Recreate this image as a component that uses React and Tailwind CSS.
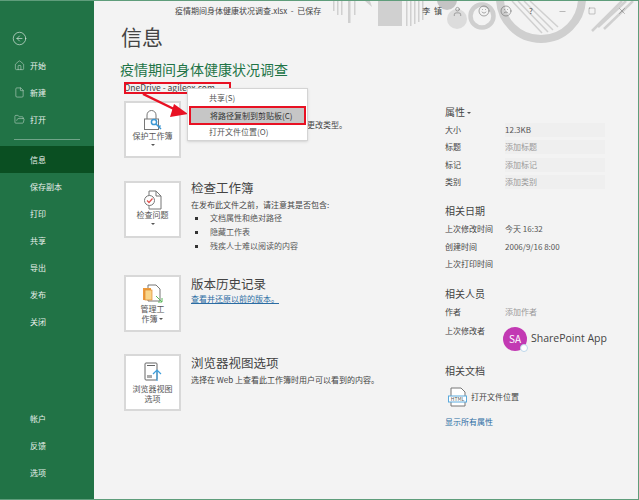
import { CircleArrowLeft, House, File, FolderOpen, User, Smile, Frown, Minus, Square, X } from 'lucide-react'

const cjk = { fontFamily: '"Noto Sans CJK SC", "Noto Sans", sans-serif' }

const navTop = [
  ['开始', House],
  ['新建', File],
  ['打开', FolderOpen],
]
const navMid = ['信息', '保存副本', '打印', '共享', '导出', '发布', '关闭']
const navBottom = ['帐户', '反馈', '选项']

function Banner() {
  return (
    <svg className="absolute left-[236px] top-0" width="309" height="48" viewBox="0 0 309 48">
      <g fill="#d0d0d0">
        <rect x="3" y="0" width="1.5" height="10" />
        <rect x="7" y="0" width="1.5" height="14" />
        <rect x="11" y="0" width="1.5" height="14" />
        <rect x="18" y="0" width="2.5" height="22" />
        <rect x="24" y="0" width="1.5" height="14" />
        <path d="M35 0 H40 L42 6 Z" />
        <rect x="48" y="0" width="24" height="25" />
        <rect x="76" y="0" width="1.5" height="25" />
        <rect x="80" y="0" width="1.5" height="25" />
        <rect x="84" y="0" width="1.5" height="23" />
        <rect x="88" y="0" width="1.5" height="21" />
        <rect x="92" y="0" width="1.5" height="19" />
        <circle cx="117" cy="-1" r="10" fill="#c4c4c4" />
        <circle cx="127" cy="18" r="10" fill="#dcdcdc" />
      </g>
      <circle cx="152" cy="15" r="11.5" fill="none" stroke="#cfcfcf" strokeWidth="4.5" />
      <circle cx="211" cy="-3" r="41" fill="none" stroke="#cfcfcf" strokeWidth="8" />
      <g stroke="#d0d0d0" strokeWidth="1.5">
        <path d="M182 0 L212 32" />
        <path d="M188 0 L218 31" />
        <path d="M194 0 L223 29" />
        <path d="M200 0 L228 26" />
      </g>
      <g stroke="#d0d0d0" strokeWidth="2.5">
        <path d="M262 30 L292 0" />
        <path d="M268 26 L296 0" />
        <path d="M274 28 L303 0" />
      </g>
    </svg>
  )
}

function ActionCard({ icon, label, className = '' }) {
  return (
    <div className={`w-[57px] h-[57px] shrink-0 bg-white border-2 border-[#d8d8d8] flex flex-col items-center justify-center text-[8px] leading-[10px] text-[#555] text-center ${className}`}>
      {icon}
      {label}
    </div>
  )
}

function LockIcon() {
  return (
    <svg width="20" height="21" viewBox="0 0 20 21">
      <path d="M4 9 V5 a4.5 4.5 0 0 1 9 0 V9" fill="none" stroke="#777" strokeWidth="1" />
      <rect x="1.5" y="9" width="14" height="10.5" fill="#fff" stroke="#777" />
      <circle cx="11" cy="12" r="2.6" fill="none" stroke="#3b97d3" strokeWidth="1.5" />
      <path d="M13 14 L18 19 M16 17 L17.5 15.5" stroke="#3b97d3" strokeWidth="1.5" />
    </svg>
  )
}

function InspectIcon() {
  return (
    <svg width="20" height="20" viewBox="0 0 20 20">
      <path d="M6 1 H13 L18 6 V19 H6 Z" fill="#fff" stroke="#777" />
      <path d="M13 1 V6 H18" fill="none" stroke="#777" />
      <circle cx="6.5" cy="10.5" r="5" fill="#fff" stroke="#777" />
      <path d="M4 10.5 L6 12.5 L9.5 8.5" fill="none" stroke="#e0524f" strokeWidth="1.2" />
    </svg>
  )
}

function ManageIcon() {
  return (
    <svg width="22" height="20" viewBox="0 0 22 20">
      <path d="M6 1 H14 L18 5 V17 H6 Z" fill="#fff" stroke="#777" />
      <rect x="1" y="4" width="8" height="12" fill="#ed9a3c" />
      <rect x="3" y="6" width="7" height="10" fill="#f9d58a" stroke="#e08a2e" strokeWidth="0.7" />
      <path d="M14 12 L20 18 M20 14 V18 H16" fill="none" stroke="#5cb85c" strokeWidth="1" />
    </svg>
  )
}

function BrowserIcon() {
  return (
    <svg width="20" height="20" viewBox="0 0 20 20" className="mb-0.5">
      <rect x="2" y="1" width="12" height="17" rx="1" fill="#fff" stroke="#666" />
      <path d="M4 3.5 H12" stroke="#666" />
      <rect x="4" y="13" width="5" height="3" fill="#aaa" />
      <path d="M14 19 V8 M10 12 L14 8 L18 12" fill="none" stroke="#3f9fdc" strokeWidth="1.2" />
    </svg>
  )
}

function Caret({ block }) {
  return <span className={`${block ? 'block mt-[3px]' : 'inline-block align-middle'} w-0 h-0 border-x-[2px] border-x-transparent border-t-[2px] border-t-[#555]`} />
}

function Prop({ label, value, muted, box }) {
  return (
    <div className="flex h-[17.5px] items-center text-[8px]">
      <span className="w-[60px] text-[#444]">{label}</span>
      {value && (
        <span className={`h-[14px] leading-[14px] ${box ? 'w-[100px] bg-[#efefef]' : ''} ${muted ? 'text-[#999]' : 'text-[#555]'}`}>
          {value}
        </span>
      )}
    </div>
  )
}

function SectionTitle({ children, className }) {
  return <h3 className={`text-[10px] leading-[14px] text-[#444] ${className}`}>{children}</h3>
}

export default function App() {
  return (
    <div style={cjk} className="relative w-[639px] h-[500px] flex overflow-hidden bg-[#f3f3f3] border-y border-r border-[#5f9d7b]">
      <aside className="w-[94px] shrink-0 bg-[#217346] text-[#e8f0eb] flex flex-col text-[8px]">
        <div className="pl-3 pt-[30px] h-[51px]">
          <CircleArrowLeft size={15} strokeWidth={1} />
        </div>
        {navTop.map(([label, Icon]) => (
          <div key={label} className="h-[27px] flex items-center pl-[14px] gap-[5px]">
            <Icon size={11} strokeWidth={1} />
            <span>{label}</span>
          </div>
        ))}
        <div className="mx-[14px] mt-[6px] mb-[6px] h-px bg-[#6fa488]" />
        {navMid.map((label) => (
          <div key={label} className={`h-[27px] flex items-center pl-[30px] ${label === '信息' ? 'bg-[#0a4f22]' : ''}`}>
            {label}
          </div>
        ))}
        <div className="mt-auto pb-[13px]">
          {navBottom.map((label) => (
            <div key={label} className="h-[27px] flex items-center pl-[30px]">{label}</div>
          ))}
        </div>
      </aside>

      <main className="flex-1 relative">
        <Banner />
        <header className="relative h-[20px] flex items-center text-[8px] text-[#444] pr-[11px]">
          <span className="ml-[81px] whitespace-pre">疫情期间身体健康状况调查.xlsx  -  已保存</span>
          <span className="ml-auto tracking-[1px]">李 镇</span>
          <div className="flex items-center text-[#555]">
            <User size={11} strokeWidth={1} className="ml-[9px]" />
            <Smile size={12} strokeWidth={1} className="ml-[15px]" />
            <Frown size={12} strokeWidth={1} className="ml-[10px]" />
            <span className="ml-[17px] w-[5px]">?</span>
            <Minus size={9} strokeWidth={1} className="ml-[24px]" />
            <Square size={8} strokeWidth={1} className="ml-[21px]" />
            <X size={10} strokeWidth={1} className="ml-[21px]" />
          </div>
        </header>

        <div className="relative flex">
          <section className="w-[321px] pl-[30px] shrink-0">
            <h1 className="text-[21px] leading-[28px] text-[#444] mt-[1px] -ml-[3px]">信息</h1>
            <h2 className="text-[14px] leading-[20px] text-[#217346] mt-[9px] -ml-[4px]">疫情期间身体健康状况调查</h2>
            <p className="text-[8.5px] leading-[12px] text-[#444] mt-[2px]">OneDrive - agileex.com</p>

            <div className="mt-[8px] flex h-[57px]">
              <ActionCard className="pb-[4px]" icon={<LockIcon />} label={<><span>保护工作簿</span><Caret block /></>} />
              {/* heading and start of this line are covered by the menu */}
              <p className="ml-[126px] mt-[17px] text-[8px] leading-[14px] text-[#444] whitespace-nowrap">更改类型。</p>
            </div>

            <div className="mt-[23px] flex h-[57px]">
              <ActionCard className="pb-[4px]" icon={<InspectIcon />} label={<><span>检查问题</span><Caret block /></>} />
              <div className="ml-[10px]">
                <h4 className="text-[12.5px] leading-[17px] text-[#444] -mt-[2px] mb-[2px]">检查工作簿</h4>
                <p className="text-[8px] leading-[13px] text-[#444] whitespace-nowrap">在发布此文件之前，请注意其是否包含:</p>
                <ul className="text-[8px] leading-[14px] text-[#555]">
                  {['文档属性和绝对路径', '隐藏工作表', '残疾人士难以阅读的内容'].map((t) => (
                    <li key={t} className="flex items-center">
                      <span className="w-[3px] h-[3px] bg-[#333] ml-[4px] mr-[12px]" />
                      {t}
                    </li>
                  ))}
                </ul>
              </div>
            </div>

            <div className="mt-[37px] flex h-[57px]">
              <ActionCard icon={<ManageIcon />} label={<><span>管理工</span><span>作簿 <Caret /></span></>} />
              <div className="ml-[10px]">
                <h4 className="text-[12.5px] leading-[17px] text-[#444]">版本历史记录</h4>
                <a className="text-[8px] leading-[13px] text-[#2b6ca3] underline block">查看并还原以前的版本。</a>
              </div>
            </div>

            <div className="mt-[22px] flex h-[57px]">
              <ActionCard icon={<BrowserIcon />} label={<><span>浏览器视图</span><span>选项</span></>} />
              <div className="ml-[10px]">
                <h4 className="text-[12.5px] leading-[17px] text-[#444]">浏览器视图选项</h4>
                <p className="text-[8px] leading-[13px] text-[#444] whitespace-nowrap mt-[2px]">选择在 Web 上查看此工作簿时用户可以看到的内容。</p>
              </div>
            </div>
          </section>

          <section className="pl-[30px] pt-[84px] flex-1">
            <SectionTitle>属性 <Caret /></SectionTitle>
            <div className="mt-[2px]">
              <Prop label="大小" value="12.3KB" box />
              <Prop label="标题" value="添加标题" muted box />
              <Prop label="标记" value="添加标记" muted box />
              <Prop label="类别" value="添加类别" muted box />
            </div>
            <SectionTitle className="mt-[13px]">相关日期</SectionTitle>
            <div className="mt-[2.5px]">
              <Prop label="上次修改时间" value="今天 16:32" />
              <Prop label="创建时间" value="2006/9/16 8:00" />
              <Prop label="上次打印时间" />
            </div>
            <SectionTitle className="mt-[14px]">相关人员</SectionTitle>
            <div className="mt-[2px]">
              <Prop label="作者" value="添加作者" muted />
              <div className="flex items-center h-[24px] mt-[6px] text-[8px]">
                <span className="w-[58px] text-[#444] self-start leading-[8px]">上次修改者</span>
                <span className="relative w-[24px] h-[24px] rounded-full bg-[#c239b3] text-white text-[10px] flex items-center justify-center">
                  SA
                  <span className="absolute -right-[1px] -bottom-[1px] w-[8px] h-[8px] rounded-full bg-white border border-[#bcd6ea]" />
                </span>
                <span className="ml-[4px] text-[10.5px] text-[#444] whitespace-nowrap" style={{ fontFamily: '"Open Sans", sans-serif' }}>SharePoint App</span>
              </div>
            </div>
            <SectionTitle className="mt-[13px]">相关文档</SectionTitle>
            <div className="flex items-center h-[20px] mt-[9px] text-[8px] text-[#444]">
              <svg width="20" height="20" viewBox="0 0 20 20" className="ml-[3px] mr-[3px]">
                <path d="M3 1 H13 L17 5 V19 H3 Z" fill="#fff" stroke="#777" />
                <rect x="0.5" y="9" width="18" height="6" fill="#fff" stroke="#5aa9dc" />
                <text x="9.5" y="14" fontSize="5" textAnchor="middle" fill="#555">HTML</text>
              </svg>
              打开文件位置
            </div>
            <a className="block mt-[9px] text-[8px] leading-[12px] text-[#2b6ca3]">显示所有属性</a>
          </section>
        </div>

        {/* path box, arrow and the open menu sit over the page */}
        <div className="absolute left-[30px] top-[81px] w-[107px] h-[12px] border-2 border-[#e81123]" />
        <svg className="absolute left-[48px] top-[92px]" width="48" height="28" viewBox="0 0 48 28">
          <path d="M1 1 L34 17" stroke="#e81123" strokeWidth="2.5" />
          <path d="M32 11 L46 21 L28 24 Z" fill="#e81123" />
        </svg>
        <div className="absolute left-[93px] top-[87px] w-[121px] h-[53px] bg-white border border-[#d4d4d4] shadow-sm text-[8px] text-[#555]">
          <div className="h-[17px] leading-[17px] pl-[21px]">共享(S)</div>
          <div className="mx-[1px] h-[19px] pl-[19px] bg-[#c6c6c6] border-2 border-[#e81123] text-[#333] leading-[15px]">将路径复制到剪贴板(C)</div>
          <div className="h-[15px] leading-[14px] pl-[21px]">打开文件位置(O)</div>
        </div>
      </main>
    </div>
  )
}
